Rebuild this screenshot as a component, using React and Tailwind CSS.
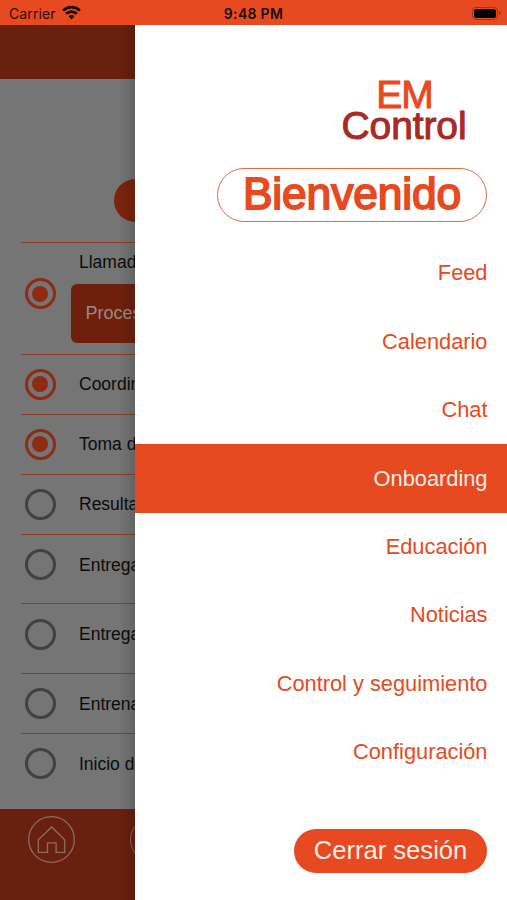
const steps = [
  { label: 'Llamada de bienvenida', done: true, action: 'Proceso', height: 'h-[112px] pb-[9px]' },
  { label: 'Coordinación', done: true, height: 'h-[60px]' },
  { label: 'Toma de datos', done: true, height: 'h-[60px]' },
  { label: 'Resultados', height: 'h-[60px]' },
  { label: 'Entrega', height: 'h-[69.5px] pb-[9px]' },
  { label: 'Entrega', height: 'h-[70px] pb-[9px]' },
  { label: 'Entrenamiento', height: 'h-[60px]' },
  { label: 'Inicio de labores', height: 'h-[60px]' },
];

const menu = [
  'Feed',
  'Calendario',
  'Chat',
  'Onboarding',
  'Educación',
  'Noticias',
  'Control y seguimiento',
  'Configuración',
];

function StatusBar() {
  return (
    <header className="grid h-[25px] shrink-0 grid-cols-3 items-center bg-[#e74921] font-['Inter',sans-serif] text-[14px] text-[#2b0d05]">
      <div className="flex items-center gap-[6px] pl-[9px] pt-[3px]">
        <span className="leading-none tracking-[0.1px]">Carrier</span>
        <svg width="19" height="15" viewBox="0 0 19 15" className="-mt-[3px]" fill="none" stroke="#140602" strokeWidth="2.7">
          <path d="M1.1 5.6a11.9 11.9 0 0 1 16.8 0" />
          <path d="M4.2 8.8a7.5 7.5 0 0 1 10.6 0" />
          <path d="M9.5 14.4l-3-3.1a4.2 4.2 0 0 1 6 0z" fill="#140602" stroke="none" />
        </svg>
      </div>
      <div className="pt-[3px] text-center text-[14px] font-semibold leading-none tracking-[0.3px] text-[#1f0903]">9:48 PM</div>
      <div className="flex items-center justify-end pr-[6px] pt-[1px]">
        <div className="h-[13px] w-[26px] rounded-[4px] border border-[#a23317] p-[1px]">
          <div className="h-full rounded-[2.5px] bg-black" />
        </div>
        <div className="ml-[1px] h-[4px] w-[2px] rounded-r-full bg-[#a23317]" />
      </div>
    </header>
  );
}

function Radio({ done }) {
  return done ? (
    <span className="flex size-[31px] shrink-0 items-center justify-center rounded-full border-[3.5px] border-[#8f2b12]">
      <span className="size-[16px] rounded-full bg-[#8f2b12]" />
    </span>
  ) : (
    <span className="size-[31px] shrink-0 rounded-full border-[3px] border-[#414141]" />
  );
}

function Step({ step }) {
  return (
    <li className={`flex items-center border-t-[1.5px] border-[#8f3a28] pl-[3.5px] ${step.height}`}>
      <Radio done={step.done} />
      {step.action ? (
        <div className="ml-[15px] flex h-full flex-1 flex-col">
          <span className="mt-[9px] pl-[8.5px] leading-[21px]">{step.label}</span>
          <span className="mt-[11px] flex h-[59px] w-[300px] shrink-0 items-center rounded-[6px] bg-[#6f200d] pl-[15px] text-[18px] text-[#9d8a85]">
            {step.action}
          </span>
        </div>
      ) : (
        <span className="ml-[23.5px] pt-px">{step.label}</span>
      )}
    </li>
  );
}

function OnboardingPage() {
  return (
    <section className="relative flex w-[135.4px] shrink-0 flex-col overflow-hidden bg-[#757575] text-[17.5px] whitespace-nowrap text-[#0c0c0c]">
      <div className="h-[54px] shrink-0 bg-[#6a200e]" />
      <div className="mt-[100px] ml-[114px] h-[43px] w-[280px] shrink-0 rounded-full bg-[#7b240e]" />
      <ul className="mt-[19.5px] ml-[21px] w-[460px]">
        {steps.map((step, i) => (
          <Step key={i} step={step} />
        ))}
      </ul>
      <nav className="mt-auto flex h-[91.5px] w-[507px] shrink-0 gap-[55px] bg-[#6a200e] pt-[7px] pl-[28px]">
        <svg width="47" height="47" viewBox="0 0 47 47" fill="none" stroke="#8d6c61" strokeWidth="1.3" className="shrink-0">
          <circle cx="23.5" cy="23.5" r="22.8" />
          <path d="M10.3 36.3V23.7L23.7 11l13 12.7v12.6h-8.6v-9.5h-8.6v9.5z" />
        </svg>
        <span className="size-[47px] shrink-0 rounded-full border-[1.3px] border-[#8d6c61]" />
      </nav>
      <div className="absolute inset-y-0 right-0 w-[16px] bg-gradient-to-r from-transparent to-black/15" />
    </section>
  );
}

function Drawer() {
  return (
    <aside className="flex flex-1 flex-col bg-white text-[#e74921]">
      <div className="mt-[54px] mr-[40px] flex w-[125px] flex-col self-end text-center text-[39px] leading-[31px]">
        <span className="tracking-[-1px] [-webkit-text-stroke:1px_#e74921]">EM</span>
        <span className="-ml-[1px] tracking-[-0.1px] text-[#a92a24] [-webkit-text-stroke:1px_#a92a24]">Control</span>
      </div>
      <h1 className="mt-[27px] mr-[20px] flex h-[54px] w-[270px] items-center justify-center self-end rounded-full border-[1.4px] border-[#e5694a] pb-[2px] text-[44.3px] tracking-[-0.1px] [-webkit-text-stroke:1.8px_#e74921]">
        Bienvenido
      </h1>
      <ul className="mt-[17px] text-[21.8px]">
        {menu.map((item) => (
          <li
            key={item}
            className={`flex h-[68.4px] items-center justify-end pr-[19.5px] pt-px ${
              item === 'Onboarding' ? 'bg-[#e74921] text-[#fdeee6]' : ''
            }`}
          >
            {item}
          </li>
        ))}
      </ul>
      <button className="mt-auto mr-[20px] mb-[27px] h-[44px] w-[193px] self-end rounded-full bg-[#e74921] text-[25.6px] leading-none text-[#fdeee6]">
        Cerrar sesión
      </button>
    </aside>
  );
}

export default function App() {
  return (
    <div className="flex h-[900px] w-[507px] flex-col overflow-hidden font-['Liberation_Sans',Arial,sans-serif]">
      <StatusBar />
      <main className="flex min-h-0 flex-1">
        <OnboardingPage />
        <Drawer />
      </main>
    </div>
  );
}
